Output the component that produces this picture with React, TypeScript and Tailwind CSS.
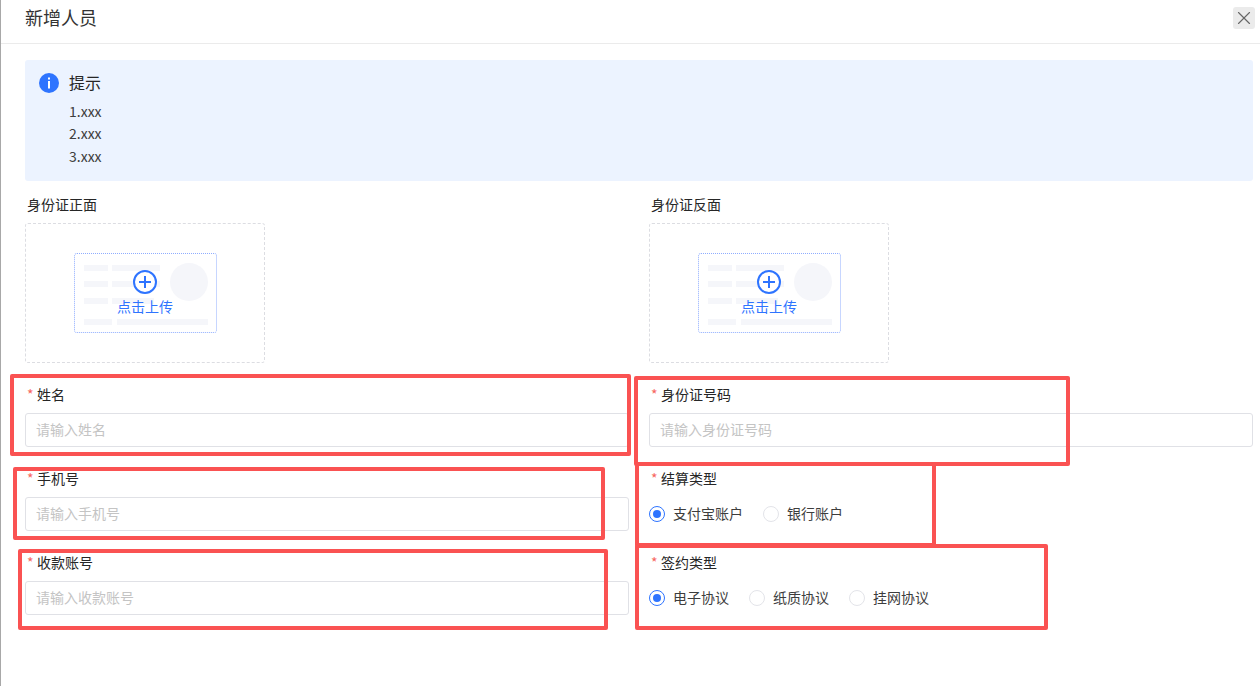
import { X } from "lucide-react";

const FONT = "font-['Microsoft_YaHei','Noto_Sans_CJK_SC','Liberation_Sans',sans-serif]";

function Label({ text, required }: { text: string; required?: boolean }) {
  return (
    <div className="-mt-px flex h-[18px] items-center pl-0.5 text-sm leading-[18px] text-[#262626]">
      {required && <span className="mr-[3px] w-[7px] text-[#f76560]">*</span>}
      {text}
    </div>
  );
}

function TextField({ label, placeholder }: { label: string; placeholder: string }) {
  return (
    <div className="h-[84px]">
      <Label text={label} required />
      <input
        readOnly
        placeholder={placeholder}
        className="mt-2.5 block h-[34px] w-full rounded-[3px] border border-[#e0e1e6] bg-white pb-0.5 pl-[10px] pr-[11px] text-sm outline-none placeholder:text-[#c4c4c4]"
      />
    </div>
  );
}

function RadioField({ label, options }: { label: string; options: string[] }) {
  return (
    <div className="h-[84px]">
      <Label text={label} required />
      <div className="mt-2.5 flex h-[34px] items-center">
        {options.map((o, i) => (
          <div key={o} className="mr-5 flex items-center gap-2 text-sm text-[#3d3d3d]">
            {i === 0 ? (
              <span className="flex h-4 w-4 items-center justify-center rounded-full border border-[#2e74ff]">
                <span className="h-2 w-2 rounded-full bg-[#2e74ff]" />
              </span>
            ) : (
              <span className="h-4 w-4 rounded-full border border-[#e3e4e9]" />
            )}
            <span className="pb-0.5">{o}</span>
          </div>
        ))}
      </div>
    </div>
  );
}

function UploadBox({ label }: { label: string }) {
  return (
    <div>
      <div className="-mt-px flex h-[18px] items-center pl-0.5 text-sm text-[#262626]">{label}</div>
      <div className="mt-2.5 flex h-[140px] w-[240px] items-center justify-center rounded-[3px] border border-dashed border-[#dcdde2]">
        <div className="relative h-20 w-[143px] rounded-[3px] border border-dotted border-[#8fadff]">
          <svg width="141" height="78" viewBox="0 0 141 78" className="block">
            <g fill="#f5f6fa">
              <rect x="9" y="11" width="24" height="6" />
              <rect x="37" y="11" width="48" height="6" />
              <rect x="9" y="27" width="24" height="6" />
              <rect x="37" y="27" width="48" height="6" />
              <rect x="9" y="44" width="24" height="6" />
              <rect x="37" y="44" width="42" height="6" />
              <rect x="9" y="65" width="28" height="6" />
              <rect x="42" y="65" width="91" height="6" />
              <circle cx="114" cy="28" r="19" />
            </g>
            <g fill="none" stroke="#2e74ff">
              <circle cx="70" cy="28" r="11" strokeWidth="2" fill="#fff" />
              <path d="M70 22v12M64 28h12" strokeWidth="2" />
            </g>
          </svg>
          <div className="absolute inset-x-0 top-[42px] text-center text-sm leading-[20px] text-[#2e74ff]">点击上传</div>
        </div>
      </div>
    </div>
  );
}

// the red marks are drawn on top of the form, they are not part of it
const marks = [
  "left-[10px] top-[374px] h-[82px] w-[621px]",
  "left-[13px] top-[467px] h-[73px] w-[592px]",
  "left-[18px] top-[549px] h-[81px] w-[590px]",
  "left-[634px] top-[376px] h-[90px] w-[436px]",
  "left-[635px] top-[462px] h-[85px] w-[301px]",
  "left-[635px] top-[544px] h-[86px] w-[413px]",
];

export default function App() {
  return (
    <div className={`relative h-[686px] w-[1260px] overflow-hidden border-l border-[#a8a8a8] bg-white ${FONT}`}>
      <div className="flex h-11 items-center justify-between border-b border-[#ebebeb] pl-6 pr-[5px]">
        <div className="-mt-2.5 text-lg text-[#333333]">新增人员</div>
        <button className="-mt-[7px] flex h-[22px] w-[22px] items-center justify-center rounded-[3px] bg-[#ebebeb] text-[#666666]">
          <X size={24} strokeWidth={1.25} />
        </button>
      </div>

      <div className="px-6 pt-4">
        <div className="h-[121px] w-[1228px] rounded-[3px] bg-[#ecf3ff] pl-[14px] pt-3">
          <div className="flex h-[22px] items-center gap-[10px] text-base text-[#262626]">
            <svg width="20" height="20" viewBox="0 0 20 20">
              <circle cx="10" cy="10" r="10" fill="#2e74ff" />
              <rect x="9" y="8" width="2" height="7.5" fill="#fff" />
              <rect x="9" y="4.5" width="2" height="2" fill="#fff" />
            </svg>
            <span className="pb-0.5">提示</span>
          </div>
          <div className="mt-[5.6px] pl-[30px] text-sm leading-[22.5px] text-[#3d3d3d]">
            <div>1.xxx</div>
            <div>2.xxx</div>
            <div>3.xxx</div>
          </div>
        </div>

        <div className="mt-[15px] grid w-[1228px] grid-cols-2 gap-x-5">
          <UploadBox label="身份证正面" />
          <UploadBox label="身份证反面" />
        </div>

        <div className="mt-[23px] grid w-[1228px] grid-cols-2 gap-x-5">
          <TextField label="姓名" placeholder="请输入姓名" />
          <TextField label="身份证号码" placeholder="请输入身份证号码" />
          <TextField label="手机号" placeholder="请输入手机号" />
          <RadioField label="结算类型" options={["支付宝账户", "银行账户"]} />
          <TextField label="收款账号" placeholder="请输入收款账号" />
          <RadioField label="签约类型" options={["电子协议", "纸质协议", "挂网协议"]} />
        </div>
      </div>

      {marks.map((m) => (
        <div key={m} className={`absolute -ml-px rounded-[2px] border-4 border-[#fa5252] ${m}`} />
      ))}
    </div>
  );
}
